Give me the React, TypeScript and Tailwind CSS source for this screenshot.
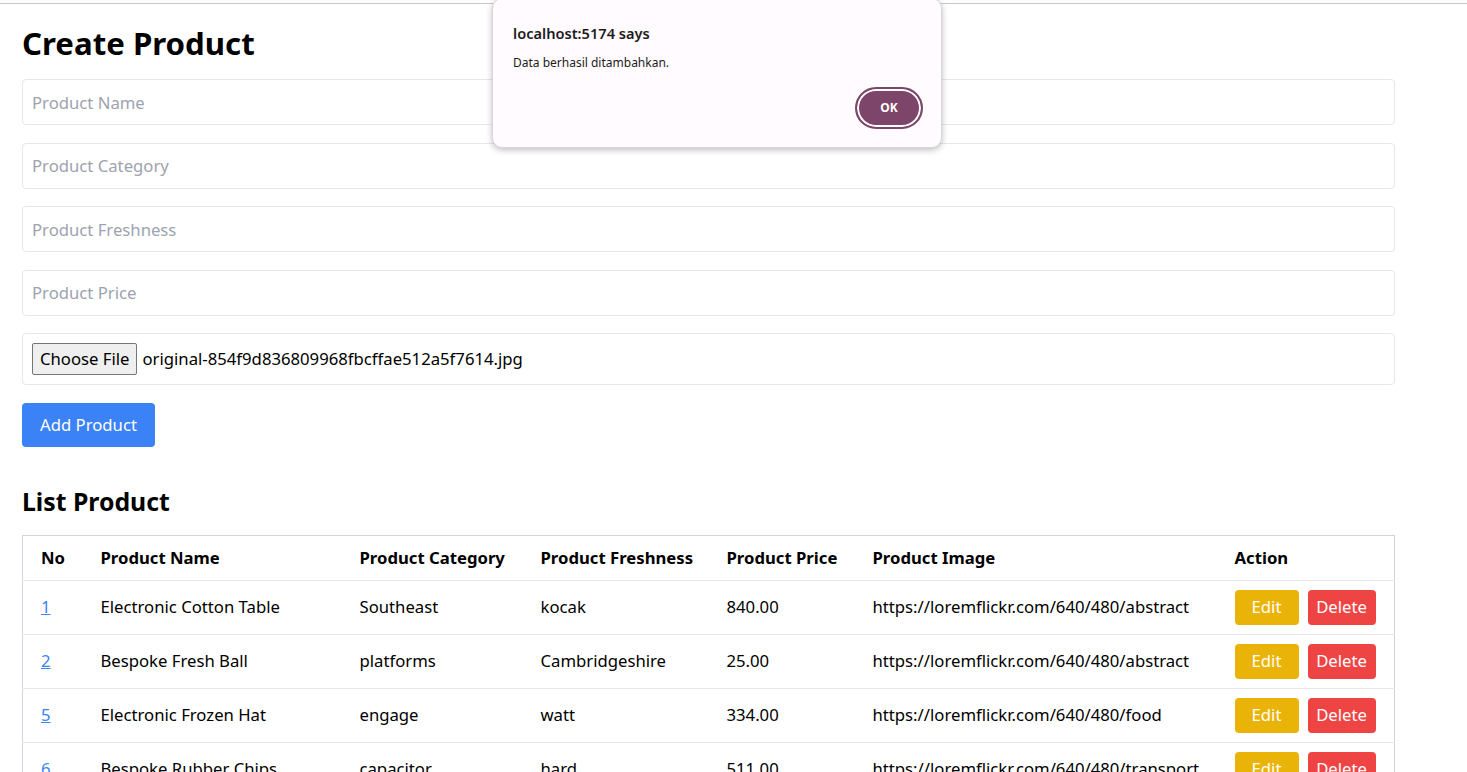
import React from 'react';

type Product = {
  no: number;
  name: string;
  category: string;
  freshness: string;
  price: string;
  image: string;
};

const products: Product[] = [
  { no: 1, name: 'Electronic Cotton Table', category: 'Southeast', freshness: 'kocak', price: '840.00', image: 'https://loremflickr.com/640/480/abstract' },
  { no: 2, name: 'Bespoke Fresh Ball', category: 'platforms', freshness: 'Cambridgeshire', price: '25.00', image: 'https://loremflickr.com/640/480/abstract' },
  { no: 5, name: 'Electronic Frozen Hat', category: 'engage', freshness: 'watt', price: '334.00', image: 'https://loremflickr.com/640/480/food' },
  { no: 6, name: 'Bespoke Rubber Chips', category: 'capacitor', freshness: 'hard', price: '511.00', image: 'https://loremflickr.com/640/480/transport' },
];

const fields = ['Product Name', 'Product Category', 'Product Freshness', 'Product Price'];

const AlertDialog = () => (
  <div className="absolute left-[492px] top-[-2px] w-[450px] h-[150px] rounded-[10px] border border-[#d9d4d9] bg-[#fffbfe] shadow-[0_2px_6px_rgba(0,0,0,0.25)]">
    <div className="pl-[20px] pt-[24px] text-[14.6px] font-semibold leading-[20px] text-[#1d1b20]">localhost:5174 says</div>
    <div className="pl-[20px] pt-[12px] text-[12px] leading-[16px] text-[#1d1b20]">Data berhasil ditambahkan.</div>
    <div className="flex justify-end pr-[18px] pt-[16px]">
      <button className="flex h-[42px] w-[68px] items-center justify-center rounded-full border-2 border-[#7d4569] bg-[#7d4569] text-[12px] font-bold text-white shadow-[inset_0_0_0_2px_#ffffff]">
        OK
      </button>
    </div>
  </div>
);

export default function App() {
  return (
    <div className="relative min-h-[772px] bg-white text-black" style={{ fontFamily: '"Noto Sans", sans-serif' }}>
      <div className="h-[3px]" />
      <div className="h-px bg-[#c8c8c8]" />
      <div className="w-[1417px] px-[22px]">
        <h1 className="mt-[19px] text-[31.2px] font-bold leading-[40px]">Create Product</h1>

        <div className="mt-[16px] flex flex-col gap-[17.5px]">
          {fields.map((f) => (
            <input
              key={f}
              placeholder={f}
              className="h-[46px] w-full rounded-[4px] border border-[#e5e7eb] px-[9px] text-[16.7px] placeholder:text-[#9ca3af] focus:outline-none"
            />
          ))}
          <div className="flex h-[52px] items-center rounded-[4px] border border-[#e5e7eb] px-[9px] text-[16.7px]">
            <span className="flex h-[32px] items-center rounded-[2px] border border-[#767676] bg-[#efefef] px-[7px]">Choose File</span>
            <span className="ml-[5px]">original-854f9d836809968fbcffae512a5f7614.jpg</span>
          </div>
          <div>
            <button className="h-[44px] w-[133px] rounded-[4px] bg-[#3b82f6] text-[16.7px] text-white">Add Product</button>
          </div>
        </div>

        <h2 className="mt-[38px] text-[24.8px] font-bold leading-[32px]">List Product</h2>

        <table className="mt-[18px] w-full table-fixed border-collapse border border-[#d1d5db] text-[16.7px]">
          <colgroup>
            <col className="w-[60px]" />
            <col className="w-[259px]" />
            <col className="w-[181px]" />
            <col className="w-[186px]" />
            <col className="w-[146px]" />
            <col className="w-[362px]" />
            <col />
          </colgroup>
          <thead>
            <tr className="h-[45px] border-b border-[#e5e7eb] text-left">
              {['No', 'Product Name', 'Product Category', 'Product Freshness', 'Product Price', 'Product Image', 'Action'].map((h) => (
                <th key={h} className="pl-[18px] font-bold whitespace-nowrap">{h}</th>
              ))}
            </tr>
          </thead>
          <tbody>
            {products.map((p) => (
              <tr key={p.no} className="h-[54px] border-b border-[#e5e7eb]">
                <td className="pl-[18px]">
                  <a href="#" className="text-[#3b82f6] underline">{p.no}</a>
                </td>
                <td className="pl-[18px] whitespace-nowrap">{p.name}</td>
                <td className="pl-[18px] whitespace-nowrap">{p.category}</td>
                <td className="pl-[18px] whitespace-nowrap">{p.freshness}</td>
                <td className="pl-[18px] whitespace-nowrap">{p.price}</td>
                <td className="pl-[18px] whitespace-nowrap">{p.image}</td>
                <td className="pl-[18px]">
                  <div className="flex gap-[9px]">
                    <button className="h-[35px] w-[64px] rounded-[4px] bg-[#eab308] text-white">Edit</button>
                    <button className="h-[35px] w-[68px] rounded-[4px] bg-[#ef4444] text-white">Delete</button>
                  </div>
                </td>
              </tr>
            ))}
          </tbody>
        </table>
      </div>
      <AlertDialog />
    </div>
  );
}
